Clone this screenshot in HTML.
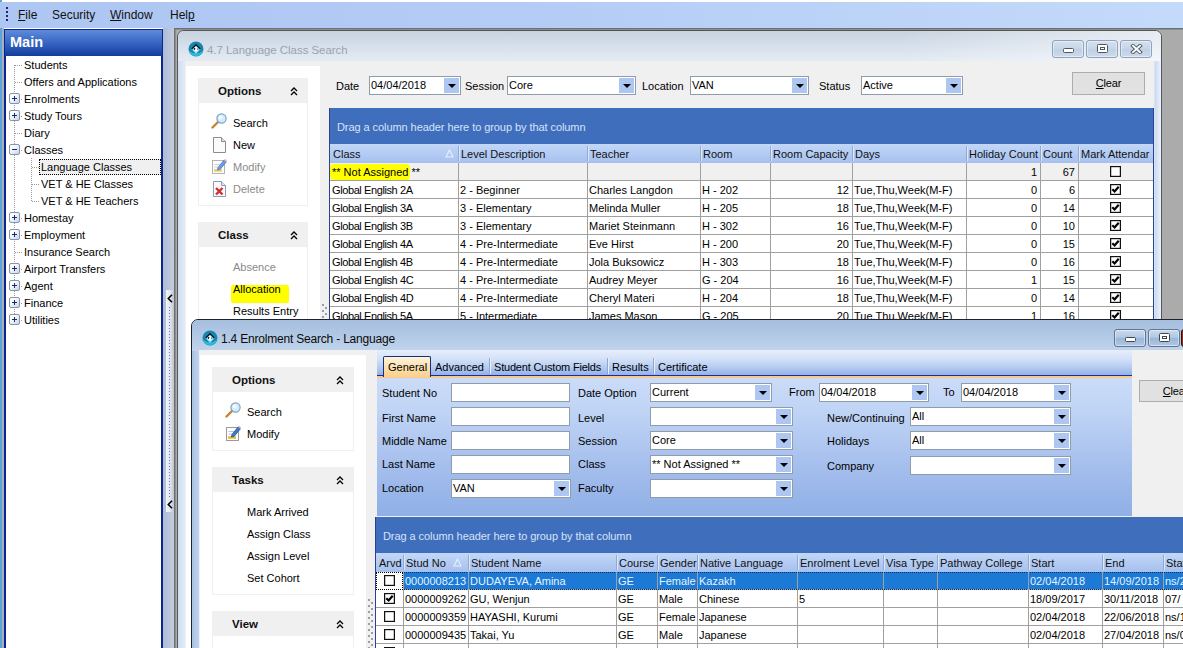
<!DOCTYPE html><html><head><meta charset="utf-8"><title>Enrolment Search</title><style>
*{box-sizing:border-box;margin:0;padding:0}
html,body{width:1183px;height:648px;overflow:hidden;background:#fff}
body{position:relative;font-family:"Liberation Sans",sans-serif;font-size:11px;color:#000;line-height:1}
.a{position:absolute}
.t{position:absolute;white-space:nowrap;line-height:14px;height:14px}
u{text-decoration:underline}
#menubar{left:0;top:2px;width:1183px;height:26px;background:linear-gradient(90deg,#adc6f2 0%,#b3cbf5 40%,#c4dafb 100%)}
#menubar .t{font-size:12px;top:6px;color:#111}
#lstripe{left:0;top:0;width:2px;height:648px;background:#5ba4dc}
#lgray{left:2px;top:28px;width:2px;height:620px;background:#aab0b8}
#main{left:4px;top:29px;width:159px;height:640px;background:#fff;border:2px solid #0c2590;border-top:none}
#mainhead{left:4px;top:29px;width:159px;height:27px;background:linear-gradient(#5e8bdc 0%,#3a69c6 45%,#123b9c 100%);border:1px solid #0c2590;border-bottom:none}
#mainhead .t{left:5px;top:3px;font-size:14.5px;font-weight:bold;color:#fff;line-height:18px;height:18px}
.tree .t{font-size:11px}
.pm{position:absolute;width:11px;height:11px;border:1px solid #8594ad;border-radius:2px;background:linear-gradient(135deg,#fff 25%,#c6d4ea 100%)}
.pm:before{content:"";position:absolute;left:2px;top:4px;width:5px;height:1px;background:#1b2a6b}
.pm.plus:after{content:"";position:absolute;left:4px;top:2px;width:1px;height:5px;background:#1b2a6b}
.dotv{position:absolute;width:1px;background-image:linear-gradient(#9a9a9a 50%,transparent 50%);background-size:1px 2px}
.doth{position:absolute;height:1px;background-image:linear-gradient(90deg,#9a9a9a 50%,transparent 50%);background-size:2px 1px}
#split{left:163px;top:28px;width:11px;height:620px;background:linear-gradient(90deg,#aebbd4,#c3cde0)}
#mdi{left:174px;top:28px;width:1009px;height:620px;background:#ababab;border-left:1px solid #6f6f6f;border-top:1px solid #6f6f6f;box-shadow:inset 1px 1px 0 #8e8e8e}
/* windows */
.win{position:absolute}
.combo{position:absolute;height:19px;background:#fff;border:1px solid #8f9cab}
.combo .v{position:absolute;left:1px;top:1px;line-height:14px;white-space:nowrap}
.combo .b{position:absolute;right:1px;top:1px;width:15px;height:15px;background:#adc6f2}
.combo .b:after{content:"";position:absolute;left:3.5px;top:5.5px;border-left:4px solid transparent;border-right:4px solid transparent;border-top:4.5px solid #000}
.inp{position:absolute;height:19px;background:#fff;border:1px solid #8f9cab}
.btn{position:absolute;background:#e1e1e1;border:1px solid #adadad;text-align:center;font-size:11.5px}
.ph{position:absolute;background:#f0f0f0}
.ph .t{font-weight:bold;font-size:11.5px;left:20px;top:6px;color:#111}
.pb{position:absolute;background:#fff;border:1px solid #f0f0f0;border-top:none}
.chev{position:absolute;width:8px;height:9px}
.grid{position:absolute;overflow:hidden;background:#fff}
.gp{position:absolute;left:0;top:0;right:0;height:36px;background:#3f6ebd}
.gp .t{color:#d6e3f8;left:7px;top:12px;letter-spacing:-0.07px}
.gh{position:absolute;left:0;right:0;height:19px;background:linear-gradient(#c3d7f7 0%,#b4ccf3 50%,#a6c0ee 100%)}
.gh .t{top:3px;color:#111}
.gh .s{position:absolute;top:2px;width:1px;height:15px;background:#8ea9d8;box-shadow:1px 0 0 #dbe7fb}
.row{position:absolute;left:0;right:0;height:18px;border-bottom:1px solid #a0a0a0}
.row .t{top:2px}
.vl{position:absolute;width:1px;background:#a0a0a0}
.cb{position:absolute;width:11px;height:11px;border:1px solid #111;background:#fff;box-shadow:inset 0 0 0 .3px #444}
.cb svg{position:absolute;left:0;top:0;width:9px;height:9px}
</style></head><body>
<div class="a" id="lstripe"></div>
<div class="a" id="menubar">
<div class="a" style="left:6px;top:5px;width:2px;height:2px;background:#1a2a6a;box-shadow:0 4px 0 #1a2a6a,0 8px 0 #1a2a6a,0 12px 0 #1a2a6a"></div>
<div class="t" style="left:18px"><u>F</u>ile</div>
<div class="t" style="left:52px">Security</div>
<div class="t" style="left:110px"><u>W</u>indow</div>
<div class="t" style="left:170px">Hel<u>p</u></div>
</div>
<div class="a" id="lgray"></div>
<div class="a" id="main"></div><div class="a" id="mainhead"><div class="t">Main</div></div>
<div class="tree">
<div class="dotv" style="left:14px;top:65px;height:256px"></div>
<div class="dotv" style="left:31px;top:158px;height:43px"></div>
<div class="doth" style="left:15px;top:65px;width:8px"></div>
<div class="t " style="left:24px;top:58px;">Students</div>
<div class="doth" style="left:15px;top:82px;width:8px"></div>
<div class="t " style="left:24px;top:75px;">Offers and Applications</div>
<div class="doth" style="left:15px;top:99px;width:8px"></div>
<div class="pm plus" style="left:9px;top:93px"></div>
<div class="t " style="left:24px;top:92px;">Enrolments</div>
<div class="doth" style="left:15px;top:116px;width:8px"></div>
<div class="pm plus" style="left:9px;top:110px"></div>
<div class="t " style="left:24px;top:109px;">Study Tours</div>
<div class="doth" style="left:15px;top:133px;width:8px"></div>
<div class="t " style="left:24px;top:126px;">Diary</div>
<div class="doth" style="left:15px;top:150px;width:8px"></div>
<div class="pm minus" style="left:9px;top:144px"></div>
<div class="t " style="left:24px;top:143px;">Classes</div>
<div class="doth" style="left:32px;top:167px;width:8px"></div>
<div class="a" style="left:39px;top:159px;width:122px;height:16px;background:#f0f0f0;border:1px dotted #000"></div>
<div class="t " style="left:41px;top:160px;">Language Classes</div>
<div class="doth" style="left:32px;top:184px;width:8px"></div>
<div class="t " style="left:41px;top:177px;">VET &amp; HE Classes</div>
<div class="doth" style="left:32px;top:201px;width:8px"></div>
<div class="t " style="left:41px;top:194px;">VET &amp; HE Teachers</div>
<div class="doth" style="left:15px;top:218px;width:8px"></div>
<div class="pm plus" style="left:9px;top:212px"></div>
<div class="t " style="left:24px;top:211px;">Homestay</div>
<div class="doth" style="left:15px;top:235px;width:8px"></div>
<div class="pm plus" style="left:9px;top:229px"></div>
<div class="t " style="left:24px;top:228px;">Employment</div>
<div class="doth" style="left:15px;top:252px;width:8px"></div>
<div class="t " style="left:24px;top:245px;">Insurance Search</div>
<div class="doth" style="left:15px;top:269px;width:8px"></div>
<div class="pm plus" style="left:9px;top:263px"></div>
<div class="t " style="left:24px;top:262px;">Airport Transfers</div>
<div class="doth" style="left:15px;top:286px;width:8px"></div>
<div class="pm plus" style="left:9px;top:280px"></div>
<div class="t " style="left:24px;top:279px;">Agent</div>
<div class="doth" style="left:15px;top:303px;width:8px"></div>
<div class="pm plus" style="left:9px;top:297px"></div>
<div class="t " style="left:24px;top:296px;">Finance</div>
<div class="doth" style="left:15px;top:320px;width:8px"></div>
<div class="pm plus" style="left:9px;top:314px"></div>
<div class="t " style="left:24px;top:313px;">Utilities</div>
</div>
<div class="a" id="split"><div class="a" style="left:3px;top:262px;width:8px;height:222px;background:linear-gradient(90deg,#f2f4f8,#e3e8f0 50%,#bcc3ce);"><div class="a" style="left:3px;top:17px;width:1px;height:190px;background-image:linear-gradient(#4a7fd0 50%,transparent 50%);background-size:1px 3px"></div></div>
<svg class="a" style="left:4px;top:266px;width:6px;height:9px" viewBox="0 0 6 9"><path d="M5 0.8 L1.3 4.5 L5 8.2" fill="none" stroke="#000" stroke-width="1.6"/></svg>
<svg class="a" style="left:4px;top:472px;width:6px;height:9px" viewBox="0 0 6 9"><path d="M5 0.8 L1.3 4.5 L5 8.2" fill="none" stroke="#000" stroke-width="1.6"/></svg>
</div>
<div class="a" id="mdi"></div><div class="a" id="w1" style="left:177px;top:30px;width:985px;height:640px;border:1px solid #53575d;border-radius:7px 7px 0 0;background:linear-gradient(90deg,#cfdeef 0,#e4edf7 8px,#e4edf7 976px,#c9dbf0 977px,#f2f6fb 984px)"></div>
<div class="a" style="left:178px;top:31px;width:983px;height:30px;border-radius:6px 6px 0 0;background:linear-gradient(#c8d3e0 0%,#d3dde9 40%,#e4ebf3 100%)"></div>
<div class="a" style="left:900px;top:31px;width:261px;height:30px;border-radius:0 6px 0 0;background:linear-gradient(90deg,rgba(255,255,255,0),rgba(255,255,255,.55))"></div>
<svg class="a" style="left:187.5px;top:41px;width:16px;height:16px" viewBox="0 0 16 16"><circle cx="8" cy="8" r="7.5" fill="#1487ab"/><path d="M1 9.5 A7.2 7.2 0 0 0 15 9.5 A10 10 0 0 1 1 9.5Z" fill="#2bbbdc"/><path d="M8 3.3 L12.7 8 L8 12.7 L3.3 8 Z" fill="#93e2f1"/><path d="M8 5 L11 8 L8 11 L5 8 Z" fill="#fff"/><path d="M3.7 8 L8 3.7 L12.3 8" fill="none" stroke="#071632" stroke-width="1.5"/><circle cx="6.7" cy="8" r="1" fill="#071632"/><circle cx="9.6" cy="8.2" r=".8" fill="#071632"/><circle cx="8.2" cy="8.8" r="1.3" fill="#fff"/></svg>
<div class="t " style="left:207px;top:43px;font-size:11.4px;color:#9aa3ad">4.7 Language Class Search</div>
<div class="a" style="left:1052px;top:40px;width:32px;height:18px;background:linear-gradient(#d4e0ee,#c6d5e7 50%,#bfd0e4 52%,#cddaea);border:1px solid #8fa2bb;border-radius:3px;box-shadow:inset 0 0 0 1px rgba(255,255,255,.45)"><div class="a" style="left:10.0px;top:7.0px;width:11px;height:5px;background:#fff;border:1px solid #4f5660;border-radius:1.5px"></div></div>
<div class="a" style="left:1086px;top:40px;width:32px;height:18px;background:linear-gradient(#d4e0ee,#c6d5e7 50%,#bfd0e4 52%,#cddaea);border:1px solid #8fa2bb;border-radius:3px;box-shadow:inset 0 0 0 1px rgba(255,255,255,.45)"><div class="a" style="left:10.0px;top:3.0px;width:11px;height:9px;background:#fff;border:1px solid #4f5660;border-radius:1.5px"><div class="a" style="left:2px;top:2px;width:5px;height:3px;border:1px solid #4f5660"></div></div></div>
<div class="a" style="left:1120px;top:40px;width:32px;height:18px;background:linear-gradient(#d4e0ee,#c6d5e7 50%,#bfd0e4 52%,#cddaea);border:1px solid #8fa2bb;border-radius:3px;box-shadow:inset 0 0 0 1px rgba(255,255,255,.45)"><svg class="a" style="left:9.0px;top:3.0px;width:13px;height:10px" viewBox="0 0 13 10"><path d="M3 1.8 L10 8.2 M10 1.8 L3 8.2" stroke="#4f5660" stroke-width="3.8" stroke-linecap="square"/><path d="M3 1.8 L10 8.2 M10 1.8 L3 8.2" stroke="#fff" stroke-width="2" stroke-linecap="square"/></svg></div>
<div class="a" style="left:185px;top:61px;width:969px;height:587px;background:#f0f0f0"></div>
<div class="a" style="left:186px;top:66px;width:134px;height:582px;background:#fff"></div>
<div class="ph" style="left:198px;top:78px;width:110px;height:25px;"><div class="t" style="top:6.0px">Options</div><svg class="chev" style="left:92px;top:8.5px" viewBox="0 0 8 9"><path d="M1 4 L4 1 L7 4 M1 8 L4 5 L7 8" fill="none" stroke="#000" stroke-width="1.3"/></svg></div><div class="pb" style="left:198px;top:103px;width:110px;height:103px;"></div>
<svg class="a" style="left:211px;top:113px;width:17px;height:16px" viewBox="0 0 17 16"><path d="M7.5 8.5 L1.5 14.5" stroke="#c8832e" stroke-width="2.4" stroke-linecap="round"/><circle cx="10.5" cy="5.5" r="4.6" fill="#d3ecfb" stroke="#7fa3c4" stroke-width="1.2"/><circle cx="9.6" cy="4.6" r="2" fill="#f4fbff"/></svg>
<div class="t " style="left:233px;top:115.5px;">Search</div>
<svg class="a" style="left:213px;top:137px;width:13px;height:16px" viewBox="0 0 13 16"><path d="M0.5 0.5 H8.5 L12.5 4.5 V15.5 H0.5 Z" fill="#fbfbfb" stroke="#8c8c8c"/><path d="M8.5 0.5 V4.5 H12.5" fill="#e4e4e4" stroke="#8c8c8c"/></svg>
<div class="t " style="left:233px;top:137.5px;">New</div>
<svg class="a" style="left:212px;top:158px;width:15px;height:16px;opacity:0.75" viewBox="0 0 15 16"><rect x="0.5" y="2.5" width="12" height="13" fill="#fdfdfd" stroke="#9a9a9a"/><path d="M2.5 6.5 H9 M2.5 9 H6" stroke="#b9c4d4"/><path d="M2 12.5 H10" stroke="#f0b429" stroke-width="2.4"/><path d="M6 9.5 L12 2 L14.3 3.9 L8.3 11.2 L5.4 12 Z" fill="#3b78d8" stroke="#1f4fa3" stroke-width=".8"/><path d="M12 2 L13 0.8 L15 2.6 L14.3 3.9 Z" fill="#e9a0a0"/></svg>
<div class="t " style="left:233px;top:159.5px;color:#8a8a8a">Modify</div>
<svg class="a" style="left:213px;top:181px;width:13px;height:16px;opacity:.9" viewBox="0 0 13 16"><path d="M0.5 0.5 H8.5 L12.5 4.5 V15.5 H0.5 Z" fill="#fbfbfb" stroke="#8090b0"/><path d="M8.5 0.5 V4.5 H12.5" fill="#dfe6f2" stroke="#8090b0"/><path d="M3 7 L9.5 13.5 M9.5 7 L3 13.5" stroke="#d01818" stroke-width="2.4"/></svg>
<div class="t " style="left:233px;top:181.5px;color:#8a8a8a">Delete</div>
<div class="ph" style="left:198px;top:222px;width:110px;height:25px;"><div class="t" style="top:6.0px">Class</div><svg class="chev" style="left:92px;top:8.5px" viewBox="0 0 8 9"><path d="M1 4 L4 1 L7 4 M1 8 L4 5 L7 8" fill="none" stroke="#000" stroke-width="1.3"/></svg></div><div class="pb" style="left:198px;top:247px;width:110px;height:153px;"></div>
<div class="t " style="left:233px;top:260px;color:#8a8a8a">Absence</div>
<div class="a" style="left:231px;top:285px;width:58px;height:18px;background:#ffff00;border-radius:2px"></div>
<div class="t " style="left:233px;top:282px;">Allocation</div>
<div class="t " style="left:233px;top:304px;">Results Entry</div>
<div class="t " style="left:336px;top:79px;">Date</div>
<div class="combo" style="left:369px;top:76px;width:92px"><div class="v">04/04/2018</div><div class="b"></div></div>
<div class="t " style="left:465px;top:79px;">Session</div>
<div class="combo" style="left:507px;top:76px;width:129px"><div class="v">Core</div><div class="b"></div></div>
<div class="t " style="left:642px;top:79px;">Location</div>
<div class="combo" style="left:690px;top:76px;width:119px"><div class="v">VAN</div><div class="b"></div></div>
<div class="t " style="left:819px;top:79px;">Status</div>
<div class="combo" style="left:861px;top:76px;width:102px"><div class="v">Active</div><div class="b"></div></div>
<div class="btn" style="left:1072px;top:72px;width:73px;height:23px;line-height:21px;font-size:11px;letter-spacing:-0.2px"><u>C</u>lear</div>
<div class="a" style="left:322px;top:304px;width:6px;height:16px;background-image:radial-gradient(circle at 1px 1px,#9a9da2 0.9px,transparent 1.3px),radial-gradient(circle at 4px 4px,#9a9da2 0.9px,transparent 1.3px);background-size:6px 6px"></div>
<div class="grid" style="left:329px;top:108px;width:825px;height:292px;border-left:1px solid #2b4193;border-right:1px solid #2b4193"><div class="gp"><div class="t">Drag a column header here to group by that column</div></div><div class="gh" style="top:36px"><div class="t" style="left:3px">Class</div><div class="t" style="left:131px">Level Description</div><div class="t" style="left:260px">Teacher</div><div class="t" style="left:373px">Room</div><div class="t" style="left:443px">Room Capacity</div><div class="t" style="left:525px">Days</div><div class="t" style="left:639px">Holiday Count</div><div class="t" style="left:713px">Count</div><div class="t" style="left:751px">Mark Attendar</div><div class="s" style="left:128px"></div><div class="s" style="left:257px"></div><div class="s" style="left:370px"></div><div class="s" style="left:440px"></div><div class="s" style="left:522px"></div><div class="s" style="left:636px"></div><div class="s" style="left:710px"></div><div class="s" style="left:748px"></div><svg class="a" style="left:115px;top:5px;width:9px;height:9px" viewBox="0 0 9 9"><path d="M4.5 1 L8 8 H1 Z" fill="none" stroke="#e6effc" stroke-width="1.1"/></svg></div><div class="row" style="top:55px;background:#f0f0f0"><div class="t" style="left:2px"><span style="background:#ffff00;box-shadow:0 0 0 2px #ffff00;border-radius:2px">** Not Assigned</span> **</div><div class="t" style="right:116px">1</div><div class="t" style="right:78px">67</div><div class="cb" style="left:780.0px;top:3px"></div></div><div class="row" style="top:73px;"><div class="t" style="left:2px"><span style="letter-spacing:-0.4px">Global English 2A</span></div><div class="t" style="left:130px">2 - Beginner</div><div class="t" style="left:259px">Charles Langdon</div><div class="t" style="left:372px">H - 202</div><div class="t" style="right:304px">12</div><div class="t" style="left:524px">Tue,Thu,Week(M-F)</div><div class="t" style="right:116px">0</div><div class="t" style="right:78px">6</div><div class="cb" style="left:780.0px;top:3px"><svg viewBox="0 0 9 9"><path d="M1.3 4.2 L3.6 6.5 L7.7 1.8" fill="none" stroke="#000" stroke-width="2.2"/></svg></div></div><div class="row" style="top:91px;"><div class="t" style="left:2px"><span style="letter-spacing:-0.4px">Global English 3A</span></div><div class="t" style="left:130px">3 - Elementary</div><div class="t" style="left:259px">Melinda Muller</div><div class="t" style="left:372px">H - 205</div><div class="t" style="right:304px">18</div><div class="t" style="left:524px">Tue,Thu,Week(M-F)</div><div class="t" style="right:116px">0</div><div class="t" style="right:78px">14</div><div class="cb" style="left:780.0px;top:3px"><svg viewBox="0 0 9 9"><path d="M1.3 4.2 L3.6 6.5 L7.7 1.8" fill="none" stroke="#000" stroke-width="2.2"/></svg></div></div><div class="row" style="top:109px;"><div class="t" style="left:2px"><span style="letter-spacing:-0.4px">Global English 3B</span></div><div class="t" style="left:130px">3 - Elementary</div><div class="t" style="left:259px">Mariet Steinmann</div><div class="t" style="left:372px">H - 302</div><div class="t" style="right:304px">16</div><div class="t" style="left:524px">Tue,Thu,Week(M-F)</div><div class="t" style="right:116px">0</div><div class="t" style="right:78px">10</div><div class="cb" style="left:780.0px;top:3px"><svg viewBox="0 0 9 9"><path d="M1.3 4.2 L3.6 6.5 L7.7 1.8" fill="none" stroke="#000" stroke-width="2.2"/></svg></div></div><div class="row" style="top:127px;"><div class="t" style="left:2px"><span style="letter-spacing:-0.4px">Global English 4A</span></div><div class="t" style="left:130px">4 - Pre-Intermediate</div><div class="t" style="left:259px">Eve Hirst</div><div class="t" style="left:372px">H - 200</div><div class="t" style="right:304px">20</div><div class="t" style="left:524px">Tue,Thu,Week(M-F)</div><div class="t" style="right:116px">0</div><div class="t" style="right:78px">15</div><div class="cb" style="left:780.0px;top:3px"><svg viewBox="0 0 9 9"><path d="M1.3 4.2 L3.6 6.5 L7.7 1.8" fill="none" stroke="#000" stroke-width="2.2"/></svg></div></div><div class="row" style="top:145px;"><div class="t" style="left:2px"><span style="letter-spacing:-0.4px">Global English 4B</span></div><div class="t" style="left:130px">4 - Pre-Intermediate</div><div class="t" style="left:259px">Jola Buksowicz</div><div class="t" style="left:372px">H - 303</div><div class="t" style="right:304px">18</div><div class="t" style="left:524px">Tue,Thu,Week(M-F)</div><div class="t" style="right:116px">0</div><div class="t" style="right:78px">16</div><div class="cb" style="left:780.0px;top:3px"><svg viewBox="0 0 9 9"><path d="M1.3 4.2 L3.6 6.5 L7.7 1.8" fill="none" stroke="#000" stroke-width="2.2"/></svg></div></div><div class="row" style="top:163px;"><div class="t" style="left:2px"><span style="letter-spacing:-0.4px">Global English 4C</span></div><div class="t" style="left:130px">4 - Pre-Intermediate</div><div class="t" style="left:259px">Audrey Meyer</div><div class="t" style="left:372px">G - 204</div><div class="t" style="right:304px">16</div><div class="t" style="left:524px">Tue,Thu,Week(M-F)</div><div class="t" style="right:116px">1</div><div class="t" style="right:78px">15</div><div class="cb" style="left:780.0px;top:3px"><svg viewBox="0 0 9 9"><path d="M1.3 4.2 L3.6 6.5 L7.7 1.8" fill="none" stroke="#000" stroke-width="2.2"/></svg></div></div><div class="row" style="top:181px;"><div class="t" style="left:2px"><span style="letter-spacing:-0.4px">Global English 4D</span></div><div class="t" style="left:130px">4 - Pre-Intermediate</div><div class="t" style="left:259px">Cheryl Materi</div><div class="t" style="left:372px">H - 204</div><div class="t" style="right:304px">18</div><div class="t" style="left:524px">Tue,Thu,Week(M-F)</div><div class="t" style="right:116px">0</div><div class="t" style="right:78px">14</div><div class="cb" style="left:780.0px;top:3px"><svg viewBox="0 0 9 9"><path d="M1.3 4.2 L3.6 6.5 L7.7 1.8" fill="none" stroke="#000" stroke-width="2.2"/></svg></div></div><div class="row" style="top:199px;"><div class="t" style="left:2px"><span style="letter-spacing:-0.4px">Global English 5A</span></div><div class="t" style="left:130px">5 - Intermediate</div><div class="t" style="left:259px">James Mason</div><div class="t" style="left:372px">G - 205</div><div class="t" style="right:304px">20</div><div class="t" style="left:524px">Tue,Thu,Week(M-F)</div><div class="t" style="right:116px">1</div><div class="t" style="right:78px">16</div><div class="cb" style="left:780.0px;top:3px"><svg viewBox="0 0 9 9"><path d="M1.3 4.2 L3.6 6.5 L7.7 1.8" fill="none" stroke="#000" stroke-width="2.2"/></svg></div></div><div class="vl" style="left:128px;top:55px;bottom:0"></div><div class="vl" style="left:257px;top:55px;bottom:0"></div><div class="vl" style="left:370px;top:55px;bottom:0"></div><div class="vl" style="left:440px;top:55px;bottom:0"></div><div class="vl" style="left:522px;top:55px;bottom:0"></div><div class="vl" style="left:636px;top:55px;bottom:0"></div><div class="vl" style="left:710px;top:55px;bottom:0"></div><div class="vl" style="left:748px;top:55px;bottom:0"></div></div>
<div class="a" id="w2" style="left:191px;top:319px;width:1010px;height:340px;border:1px solid #1d232c;border-radius:7px 7px 0 0;background:linear-gradient(90deg,#a9c2e1 0,#c2d5ec 8px,#c2d5ec 100%)"></div>
<div class="a" style="left:192px;top:320px;width:998px;height:31px;border-radius:6px 0 0 0;background:linear-gradient(#a6bfde 0%,#b0c7e4 45%,#c1d4eb 100%)"></div>
<svg class="a" style="left:201.5px;top:330px;width:16px;height:16px" viewBox="0 0 16 16"><circle cx="8" cy="8" r="7.5" fill="#1487ab"/><path d="M1 9.5 A7.2 7.2 0 0 0 15 9.5 A10 10 0 0 1 1 9.5Z" fill="#2bbbdc"/><path d="M8 3.3 L12.7 8 L8 12.7 L3.3 8 Z" fill="#93e2f1"/><path d="M8 5 L11 8 L8 11 L5 8 Z" fill="#fff"/><path d="M3.7 8 L8 3.7 L12.3 8" fill="none" stroke="#071632" stroke-width="1.5"/><circle cx="6.7" cy="8" r="1" fill="#071632"/><circle cx="9.6" cy="8.2" r=".8" fill="#071632"/><circle cx="8.2" cy="8.8" r="1.3" fill="#fff"/></svg>
<div class="t " style="left:221px;top:332px;font-size:12px;color:#0a0a0a;letter-spacing:-0.2px">1.4 Enrolment Search - Language</div>
<div class="a" style="left:1114px;top:329px;width:32px;height:18px;background:linear-gradient(#c9d9ed,#b2c8e3 46%,#9ab6d9 52%,#b0c8e4);border:1px solid #63758d;border-radius:3px;box-shadow:inset 0 0 0 1px rgba(255,255,255,.45)"><div class="a" style="left:10.0px;top:7.0px;width:11px;height:5px;background:#fff;border:1px solid #3c4654;border-radius:1.5px"></div></div>
<div class="a" style="left:1148px;top:329px;width:32px;height:18px;background:linear-gradient(#c9d9ed,#b2c8e3 46%,#9ab6d9 52%,#b0c8e4);border:1px solid #63758d;border-radius:3px;box-shadow:inset 0 0 0 1px rgba(255,255,255,.45)"><div class="a" style="left:10.0px;top:3.0px;width:11px;height:9px;background:#fff;border:1px solid #3c4654;border-radius:1.5px"><div class="a" style="left:2px;top:2px;width:5px;height:3px;border:1px solid #3c4654"></div></div></div>
<div class="a" style="left:1181px;top:329px;width:19px;height:18px;background:#8a3024;border:1px solid #25110d;border-radius:3px"></div>
<div class="a" style="left:199px;top:350px;width:991px;height:298px;background:#f0f0f0"></div>
<div class="a" style="left:200px;top:355px;width:166px;height:293px;background:#fff"></div>
<div class="ph" style="left:212px;top:367px;width:142px;height:25px;"><div class="t" style="top:6.0px">Options</div><svg class="chev" style="left:124px;top:8.5px" viewBox="0 0 8 9"><path d="M1 4 L4 1 L7 4 M1 8 L4 5 L7 8" fill="none" stroke="#000" stroke-width="1.3"/></svg></div><div class="pb" style="left:212px;top:392px;width:142px;height:59px;"></div>
<svg class="a" style="left:225px;top:402px;width:17px;height:16px" viewBox="0 0 17 16"><path d="M7.5 8.5 L1.5 14.5" stroke="#c8832e" stroke-width="2.4" stroke-linecap="round"/><circle cx="10.5" cy="5.5" r="4.6" fill="#d3ecfb" stroke="#7fa3c4" stroke-width="1.2"/><circle cx="9.6" cy="4.6" r="2" fill="#f4fbff"/></svg>
<div class="t " style="left:247px;top:404.5px;">Search</div>
<svg class="a" style="left:226px;top:425px;width:15px;height:16px;opacity:1" viewBox="0 0 15 16"><rect x="0.5" y="2.5" width="12" height="13" fill="#fdfdfd" stroke="#9a9a9a"/><path d="M2.5 6.5 H9 M2.5 9 H6" stroke="#b9c4d4"/><path d="M2 12.5 H10" stroke="#f0b429" stroke-width="2.4"/><path d="M6 9.5 L12 2 L14.3 3.9 L8.3 11.2 L5.4 12 Z" fill="#3b78d8" stroke="#1f4fa3" stroke-width=".8"/><path d="M12 2 L13 0.8 L15 2.6 L14.3 3.9 Z" fill="#e9a0a0"/></svg>
<div class="t " style="left:247px;top:426.5px;">Modify</div>
<div class="ph" style="left:212px;top:467px;width:142px;height:25px;"><div class="t" style="top:6.0px">Tasks</div><svg class="chev" style="left:124px;top:8.5px" viewBox="0 0 8 9"><path d="M1 4 L4 1 L7 4 M1 8 L4 5 L7 8" fill="none" stroke="#000" stroke-width="1.3"/></svg></div><div class="pb" style="left:212px;top:492px;width:142px;height:103px;"></div>
<div class="t " style="left:247px;top:505px;">Mark Arrived</div>
<div class="t " style="left:247px;top:527px;">Assign Class</div>
<div class="t " style="left:247px;top:549px;">Assign Level</div>
<div class="t " style="left:247px;top:571px;">Set Cohort</div>
<div class="ph" style="left:212px;top:611px;width:142px;height:25px;"><div class="t" style="top:6.0px">View</div><svg class="chev" style="left:124px;top:8.5px" viewBox="0 0 8 9"><path d="M1 4 L4 1 L7 4 M1 8 L4 5 L7 8" fill="none" stroke="#000" stroke-width="1.3"/></svg></div><div class="pb" style="left:212px;top:636px;width:142px;height:64px;"></div>
<div class="a" style="left:377px;top:350px;width:755px;height:166px;background:linear-gradient(#e6eefb 0px,#d3e1f8 9px,#b3caf0 18px,#92b2e8 25px,#cbdcf8 27px,#c0d4f5 60px,#a3bdec 120px,#8fafe6 166px)"></div>
<div class="a" style="left:377px;top:375px;width:755px;height:1px;background:#1a2f9c"></div>
<div class="a" style="left:377px;top:376px;width:755px;height:2px;background:#f9c88c"></div>
<div class="a" style="left:383px;top:356px;width:48px;height:21px;background:linear-gradient(#fff3dc,#fde1b0 50%,#fbcf8c);border:1px solid #1a2f7c;border-bottom:none;border-radius:2px 2px 0 0"></div>
<div class="t " style="left:388px;top:360px;">General</div>
<div class="t " style="left:435px;top:360px;">Advanced</div>
<div class="t " style="left:494px;top:360px;letter-spacing:-0.2px">Student Custom Fields</div>
<div class="t " style="left:612px;top:360px;">Results</div>
<div class="t " style="left:658px;top:360px;">Certificate</div>
<div class="a" style="left:489px;top:358px;width:1px;height:16px;background:#8fa6d3;box-shadow:1px 0 0 #e6eefc"></div>
<div class="a" style="left:607px;top:358px;width:1px;height:16px;background:#8fa6d3;box-shadow:1px 0 0 #e6eefc"></div>
<div class="a" style="left:653px;top:358px;width:1px;height:16px;background:#8fa6d3;box-shadow:1px 0 0 #e6eefc"></div>
<div class="t " style="left:382px;top:385.5px;">Student No</div>
<div class="t " style="left:578px;top:385.5px;">Date Option</div>
<div class="t " style="left:382px;top:410.5px;">First Name</div>
<div class="t " style="left:578px;top:410.5px;">Level</div>
<div class="t " style="left:382px;top:434px;">Middle Name</div>
<div class="t " style="left:578px;top:434px;">Session</div>
<div class="t " style="left:382px;top:457px;">Last Name</div>
<div class="t " style="left:578px;top:457px;">Class</div>
<div class="t " style="left:382px;top:481px;">Location</div>
<div class="t " style="left:578px;top:481px;">Faculty</div>
<div class="inp" style="left:451px;top:383px;width:119px"></div>
<div class="inp" style="left:451px;top:407px;width:119px"></div>
<div class="inp" style="left:451px;top:431px;width:119px"></div>
<div class="inp" style="left:451px;top:455px;width:119px"></div>
<div class="combo" style="left:451px;top:479px;width:120px"><div class="v">VAN</div><div class="b"></div></div>
<div class="combo" style="left:650px;top:383px;width:122px"><div class="v">Current</div><div class="b"></div></div>
<div class="combo" style="left:650px;top:407px;width:143px"><div class="v"></div><div class="b"></div></div>
<div class="combo" style="left:650px;top:431px;width:143px"><div class="v">Core</div><div class="b"></div></div>
<div class="combo" style="left:650px;top:455px;width:143px"><div class="v">** Not Assigned **</div><div class="b"></div></div>
<div class="combo" style="left:650px;top:479px;width:143px"><div class="v"></div><div class="b"></div></div>
<div class="t " style="left:789px;top:385px;">From</div>
<div class="combo" style="left:819px;top:383px;width:110px"><div class="v">04/04/2018</div><div class="b"></div></div>
<div class="t " style="left:943px;top:385px;">To</div>
<div class="combo" style="left:961px;top:383px;width:110px"><div class="v">04/04/2018</div><div class="b"></div></div>
<div class="t " style="left:827px;top:411px;">New/Continuing</div>
<div class="combo" style="left:910px;top:407px;width:161px"><div class="v">All</div><div class="b"></div></div>
<div class="t " style="left:827px;top:434px;">Holidays</div>
<div class="combo" style="left:910px;top:431px;width:161px"><div class="v">All</div><div class="b"></div></div>
<div class="t " style="left:827px;top:459px;">Company</div>
<div class="combo" style="left:910px;top:456px;width:161px"><div class="v"></div><div class="b"></div></div>
<div class="btn" style="left:1139px;top:380px;width:73px;height:22px;line-height:20px;font-size:11px;letter-spacing:-0.2px"><u>C</u>lear</div>
<div class="a" style="left:368px;top:599px;width:6px;height:49px;background-image:radial-gradient(circle at 1px 1px,#9a9da2 0.9px,transparent 1.3px),radial-gradient(circle at 4px 4px,#9a9da2 0.9px,transparent 1.3px);background-size:6px 6px"></div>
<div class="grid" style="left:375px;top:517px;width:825px;height:143px;border-left:1px solid #2b4193;border-right:1px solid #2b4193"><div class="gp"><div class="t">Drag a column header here to group by that column</div></div><div class="gh" style="top:36px"><div class="t" style="left:3px">Arvd</div><div class="t" style="left:30px">Stud No</div><div class="t" style="left:95px">Student Name</div><div class="t" style="left:243px">Course</div><div class="t" style="left:284px">Gender</div><div class="t" style="left:324px">Native Language</div><div class="t" style="left:424px">Enrolment Level</div><div class="t" style="left:510px">Visa Type</div><div class="t" style="left:564px">Pathway College</div><div class="t" style="left:655px">Start</div><div class="t" style="left:729px">End</div><div class="t" style="left:790px">Status</div><div class="s" style="left:27px"></div><div class="s" style="left:92px"></div><div class="s" style="left:240px"></div><div class="s" style="left:281px"></div><div class="s" style="left:321px"></div><div class="s" style="left:421px"></div><div class="s" style="left:507px"></div><div class="s" style="left:561px"></div><div class="s" style="left:652px"></div><div class="s" style="left:726px"></div><div class="s" style="left:787px"></div><svg class="a" style="left:77px;top:5px;width:9px;height:9px" viewBox="0 0 9 9"><path d="M4.5 1 L8 8 H1 Z" fill="none" stroke="#e6effc" stroke-width="1.1"/></svg></div><div class="row" style="top:55px;background:#1c7ad6;color:#e4f3ff;outline:1px dotted #0c2f5c;outline-offset:-1px;"><div class="cb" style="left:7.5px;top:3px"></div><div class="t" style="left:29px">0000008213</div><div class="t" style="left:94px">DUDAYEVA, Amina</div><div class="t" style="left:242px">GE</div><div class="t" style="left:283px">Female</div><div class="t" style="left:323px">Kazakh</div><div class="t" style="left:654px">02/04/2018</div><div class="t" style="left:728px">14/09/2018</div><div class="t" style="left:789px">ns/2</div></div><div class="row" style="top:73px;"><div class="cb" style="left:7.5px;top:3px"><svg viewBox="0 0 9 9"><path d="M1.3 4.2 L3.6 6.5 L7.7 1.8" fill="none" stroke="#000" stroke-width="2.2"/></svg></div><div class="t" style="left:29px">0000009262</div><div class="t" style="left:94px">GU, Wenjun</div><div class="t" style="left:242px">GE</div><div class="t" style="left:283px">Male</div><div class="t" style="left:323px">Chinese</div><div class="t" style="left:423px">5</div><div class="t" style="left:654px">18/09/2017</div><div class="t" style="left:728px">30/11/2018</div><div class="t" style="left:789px">07/</div></div><div class="row" style="top:91px;"><div class="cb" style="left:7.5px;top:3px"></div><div class="t" style="left:29px">0000009359</div><div class="t" style="left:94px">HAYASHI, Kurumi</div><div class="t" style="left:242px">GE</div><div class="t" style="left:283px">Female</div><div class="t" style="left:323px">Japanese</div><div class="t" style="left:654px">02/04/2018</div><div class="t" style="left:728px">22/06/2018</div><div class="t" style="left:789px">ns/1</div></div><div class="row" style="top:109px;"><div class="cb" style="left:7.5px;top:3px"></div><div class="t" style="left:29px">0000009435</div><div class="t" style="left:94px">Takai, Yu</div><div class="t" style="left:242px">GE</div><div class="t" style="left:283px">Male</div><div class="t" style="left:323px">Japanese</div><div class="t" style="left:654px">02/04/2018</div><div class="t" style="left:728px">27/04/2018</div><div class="t" style="left:789px">ns/0</div></div><div class="row" style="top:127px;"><div class="cb" style="left:7.5px;top:3px"><svg viewBox="0 0 9 9"><path d="M1.3 4.2 L3.6 6.5 L7.7 1.8" fill="none" stroke="#000" stroke-width="2.2"/></svg></div></div><div class="vl" style="left:27px;top:55px;bottom:0"></div><div class="vl" style="left:92px;top:55px;bottom:0"></div><div class="vl" style="left:240px;top:55px;bottom:0"></div><div class="vl" style="left:281px;top:55px;bottom:0"></div><div class="vl" style="left:321px;top:55px;bottom:0"></div><div class="vl" style="left:421px;top:55px;bottom:0"></div><div class="vl" style="left:507px;top:55px;bottom:0"></div><div class="vl" style="left:561px;top:55px;bottom:0"></div><div class="vl" style="left:652px;top:55px;bottom:0"></div><div class="vl" style="left:726px;top:55px;bottom:0"></div><div class="vl" style="left:787px;top:55px;bottom:0"></div></div>
<div class="a" style="left:376px;top:572px;width:27px;height:18px;background:#fff;border:1px dotted #000"></div>
<div class="cb" style="left:384px;top:575px;width:11px;height:11px;"></div>
</body></html>
